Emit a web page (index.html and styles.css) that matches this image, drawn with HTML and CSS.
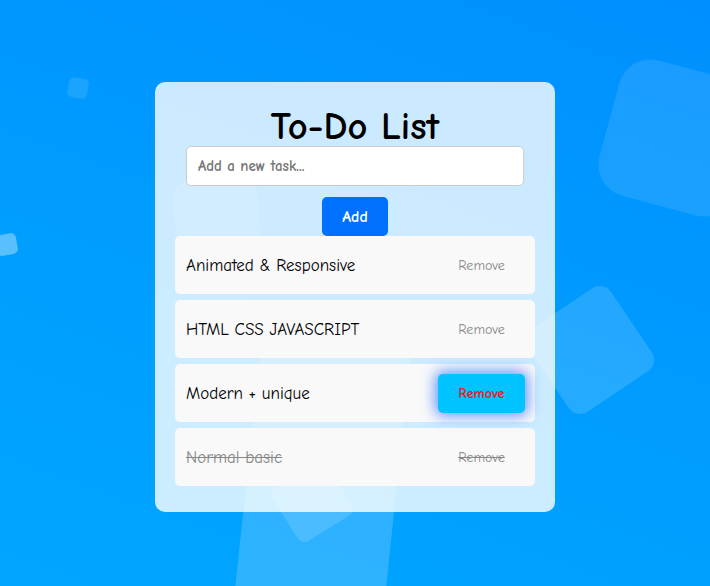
FILE: index.html
```html
<!DOCTYPE html>
<html lang="en">
<head>
<meta charset="UTF-8">
<title>To-Do List</title>
<link rel="stylesheet" href="styles.css">
</head>
<body>
<div class="bg">
  <span class="shape s1"></span>
  <span class="shape s2"></span>
  <span class="shape s3"></span>
  <span class="shape s4"></span>
  <span class="shape s5"></span>
  <span class="shape s6"></span>
  <span class="shape s7"></span>
</div>
<main class="page">
  <section class="card">
    <h1 class="title">To-Do List</h1>
    <input class="task-input" type="text" placeholder="Add a new task...">
    <button class="add-btn">Add</button>
    <ul class="tasks">
      <li class="task"><span class="task-text">Animated &amp; Responsive</span><button class="remove-btn">Remove</button></li>
      <li class="task"><span class="task-text">HTML CSS JAVASCRIPT</span><button class="remove-btn">Remove</button></li>
      <li class="task"><span class="task-text">Modern + unique</span><button class="remove-btn hover">Remove</button></li>
      <li class="task done"><span class="task-text">Normal basic</span><button class="remove-btn">Remove</button></li>
    </ul>
  </section>
</main>
</body>
</html>
```
FILE: styles.css
```css
* { box-sizing: border-box; }
html, body { margin: 0; height: 100%; }
body {
  font-family: "Comic Sans MS", "Comic Neue", cursive;
  background: linear-gradient(200deg, #008fff 0%, #009cff 50%, #00a6ff 100%);
  overflow: hidden;
  position: relative;
}
.bg { position: absolute; inset: 0; overflow: hidden; }
.shape { position: absolute; display: block; background: rgba(255,255,255,0.1); }
.s1 { left: 68px; top: 78px; width: 20px; height: 20px; border-radius: 5px; transform: rotate(10deg); }
.s2 { left: -4px; top: 234px; width: 21px; height: 21px; border-radius: 5px; transform: rotate(-10deg); background: rgba(255,255,255,0.35); }
.s3 { left: 607px; top: 68px; width: 140px; height: 140px; border-radius: 32px; transform: rotate(15deg); }
.s4 { left: 540px; top: 300px; width: 100px; height: 100px; border-radius: 14px; transform: rotate(-34deg); background: rgba(255,255,255,0.14); }
.s5 { left: 247px; top: 330px; width: 150px; height: 300px; border-radius: 12px; transform: rotate(6deg); background: rgba(255,255,255,0.18); }
.s6 { left: 280px; top: 469px; width: 64px; height: 64px; border-radius: 8px; transform: rotate(-32deg); background: rgba(255,255,255,0.14); }
.s7 { left: 176px; top: 180px; width: 84px; height: 110px; border-radius: 14px; transform: rotate(-4deg); background: rgba(255,255,255,0.1); }

.page {
  position: relative;
  display: flex;
  justify-content: center;
  padding-top: 82px;
}
.card {
  width: 400px;
  padding: 20px 20px 20px;
  border-radius: 10px;
  background: rgba(255,255,255,0.8);
  display: flex;
  flex-direction: column;
  align-items: center;
}
.title {
  margin: 0;
  font-size: 38.5px;
  line-height: 44px;
  font-weight: bold;
  color: #000;
  position: relative;
  top: 3px;
}
.task-input {
  width: 338px;
  height: 40px;
  padding: 0 11px;
  border: 1px solid #ccc;
  border-radius: 5px;
  background: #fff;
  font-family: inherit;
  font-size: 15px;
  font-weight: bold;
}
.task-input::placeholder { color: #777; }
.add-btn {
  margin-top: 11px;
  height: 39px;
  width: 66px;
  padding: 0;
  border: none;
  border-radius: 5px;
  background: #0070ff;
  color: #fff;
  font-family: inherit;
  font-size: 16px;
  font-weight: bold;
}
.tasks {
  list-style: none;
  margin: 0;
  padding: 0;
  width: 360px;
}
.task {
  height: 58px;
  margin-bottom: 6px;
  padding: 0 10px 0 11px;
  display: flex;
  align-items: center;
  justify-content: space-between;
  background: #f9f9f9;
  border-radius: 5px;
  font-size: 17px;
  color: #000;
}
.remove-btn {
  width: 87px;
  height: 39px;
  padding: 0;
  border: none;
  border-radius: 5px;
  background: transparent;
  color: #888;
  font-family: inherit;
  font-size: 14px;
}
.remove-btn.hover {
  background: #00c3ff;
  color: #f01818;
  font-weight: bold;
  box-shadow: 0 0 14px 3px rgba(40, 110, 255, 0.7);
}
.done .task-text, .done .remove-btn {
  text-decoration: line-through;
  color: #888;
}
```
